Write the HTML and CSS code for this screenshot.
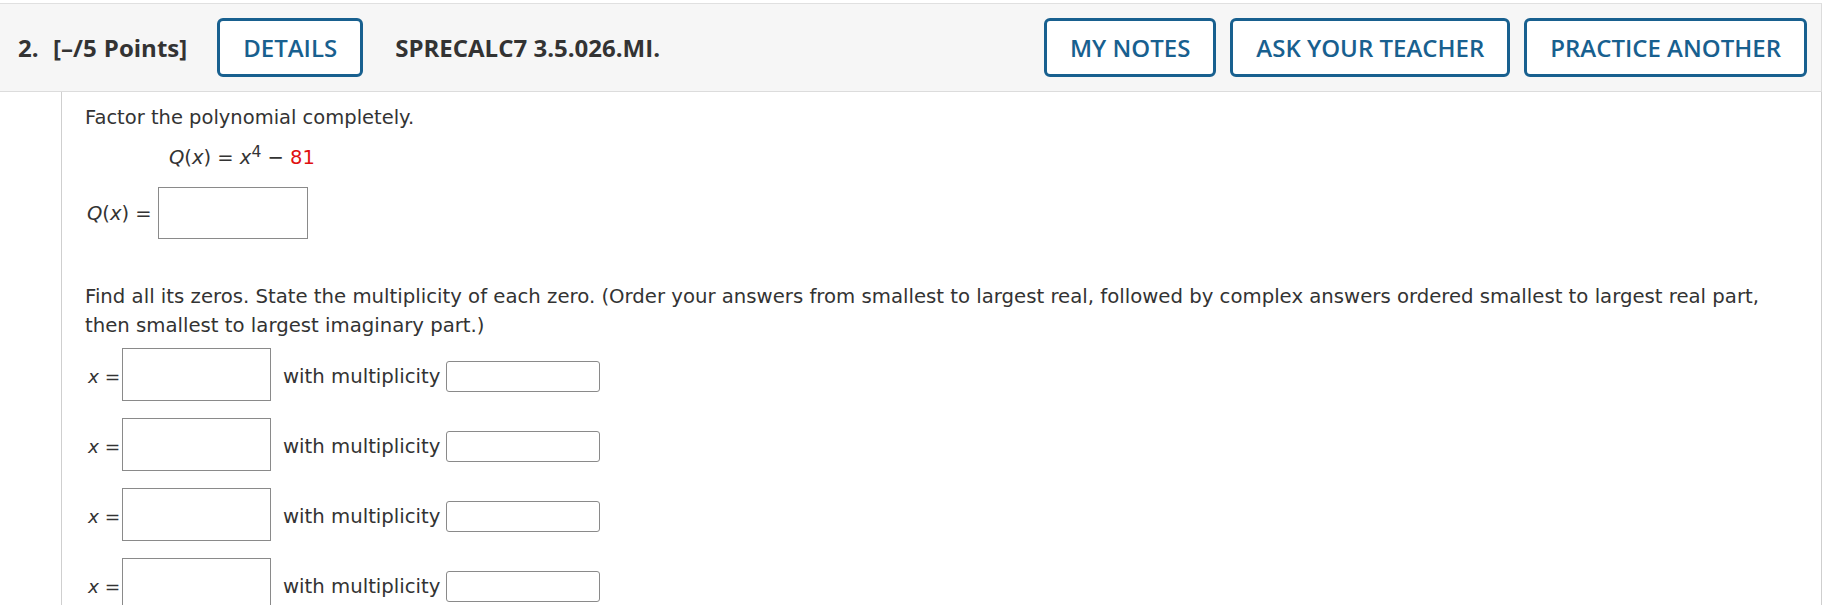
FILE: index.html
```html
<!DOCTYPE html>
<html>
<head>
<meta charset="utf-8">
<link rel="stylesheet" href="styles.css">
</head>
<body>
<div class="question">
  <div class="qhead">
    <span class="qnum">2.&nbsp; [–/5 Points]</span>
    <button class="btn btn-details">DETAILS</button>
    <span class="qcode">SPRECALC7 3.5.026.MI.</span>
    <div class="actions">
      <button class="btn">MY NOTES</button>
      <button class="btn">ASK YOUR TEACHER</button>
      <button class="btn">PRACTICE ANOTHER</button>
    </div>
  </div>
  <div class="qbody">
    <p class="text">Factor the polynomial completely.</p>
    <p class="formula"><i>Q</i>(<i>x</i>) = <i>x</i><sup>4</sup> − <span class="red">81</span></p>
    <div class="qrow">
      <span class="math"><i>Q</i>(<i>x</i>) =</span>
      <span class="box big"></span>
    </div>
    <p class="find">Find all its zeros. State the multiplicity of each zero. (Order your answers from smallest to largest real, followed by complex answers ordered smallest to largest real part, then smallest to largest imaginary part.)</p>
    <div class="zrow"><span class="xeq"><i>x</i> =</span><span class="box big"></span><span class="mult">with multiplicity</span><span class="box small"></span></div>
    <div class="zrow"><span class="xeq"><i>x</i> =</span><span class="box big"></span><span class="mult">with multiplicity</span><span class="box small"></span></div>
    <div class="zrow"><span class="xeq"><i>x</i> =</span><span class="box big"></span><span class="mult">with multiplicity</span><span class="box small"></span></div>
    <div class="zrow"><span class="xeq"><i>x</i> =</span><span class="box big"></span><span class="mult">with multiplicity</span><span class="box small"></span></div>
  </div>
</div>
</body>
</html>
```
FILE: styles.css
```css
html, body {
  margin: 0;
  padding: 0;
  background: #fff;
  overflow: hidden;
}
body {
  padding-top: 3px;
}
.question {
  width: 1822px;
}
.qhead {
  box-sizing: border-box;
  height: 89px;
  display: flex;
  align-items: center;
  background: #f6f6f6;
  border-top: 1px solid #e0e0e0;
  border-right: 1px solid #dcdcdc;
  border-bottom: 1px solid #dcdcdc;
  padding: 0 14px 0 18px;
  font-family: "Open Sans", "Liberation Sans", sans-serif;
  color: #333;
}
.qnum {
  font-weight: 700;
  font-size: 24px;
  margin-right: 30px;
  word-spacing: 1px;
}
.qcode {
  font-weight: 700;
  font-size: 24px;
  margin-left: 32px;
}
.btn {
  box-sizing: border-box;
  height: 59px;
  padding: 0 23px;
  background: #fff;
  border: 3px solid #18608f;
  border-radius: 6px;
  color: #18608f;
  font-family: "Open Sans", "Liberation Sans", sans-serif;
  font-weight: 600;
  font-size: 24px;
}
.btn-details {
  width: 146px;
  padding: 0;
}
.actions {
  margin-left: auto;
  display: flex;
  gap: 14px;
}
.qbody {
  margin-left: 61px;
  border-left: 1px solid #cfcfcf;
  border-right: 1px solid #cfcfcf;
  padding: 11px 0 40px 23px;
  font-family: "DejaVu Sans", Verdana, sans-serif;
  font-size: 19.5px;
  color: #333;
}
.text {
  margin: 0;
  line-height: 29px;
}
.formula {
  margin: 11px 0 0 84px;
  line-height: 29px;
}
.formula sup {
  font-size: 0.8em;
  line-height: 0;
  vertical-align: 0.45em;
}
.red {
  color: #e01010;
}
.qrow {
  display: flex;
  align-items: center;
  margin-top: 15px;
  height: 52px;
}
.math {
  margin-right: 6px;
  padding-left: 2px;
}
.box {
  box-sizing: border-box;
  display: inline-block;
  background: #fff;
  border: 1px solid #8a8a8a;
}
.big {
  width: 150px;
  height: 52px;
}
.small {
  width: 154px;
  height: 31px;
  border-radius: 3px;
  margin-top: 4px;
}
.find {
  margin: 43px 0 0 0;
  line-height: 29px;
  font-size: 19.7px;
  padding-right: 40px;
}
.zrow {
  display: flex;
  align-items: center;
  height: 53px;
  margin-top: 17px;
}
.find + .zrow {
  margin-top: 8px;
}
.zrow .big {
  width: 149px;
  height: 53px;
}
.xeq {
  width: 37px;
  padding-left: 3px;
  padding-top: 4px;
  box-sizing: border-box;
  white-space: nowrap;
  font-size: 18.5px;
}
.mult {
  font-size: 19.7px;
  padding-top: 4px;
  margin: 0 6px 0 12px;
}
```
